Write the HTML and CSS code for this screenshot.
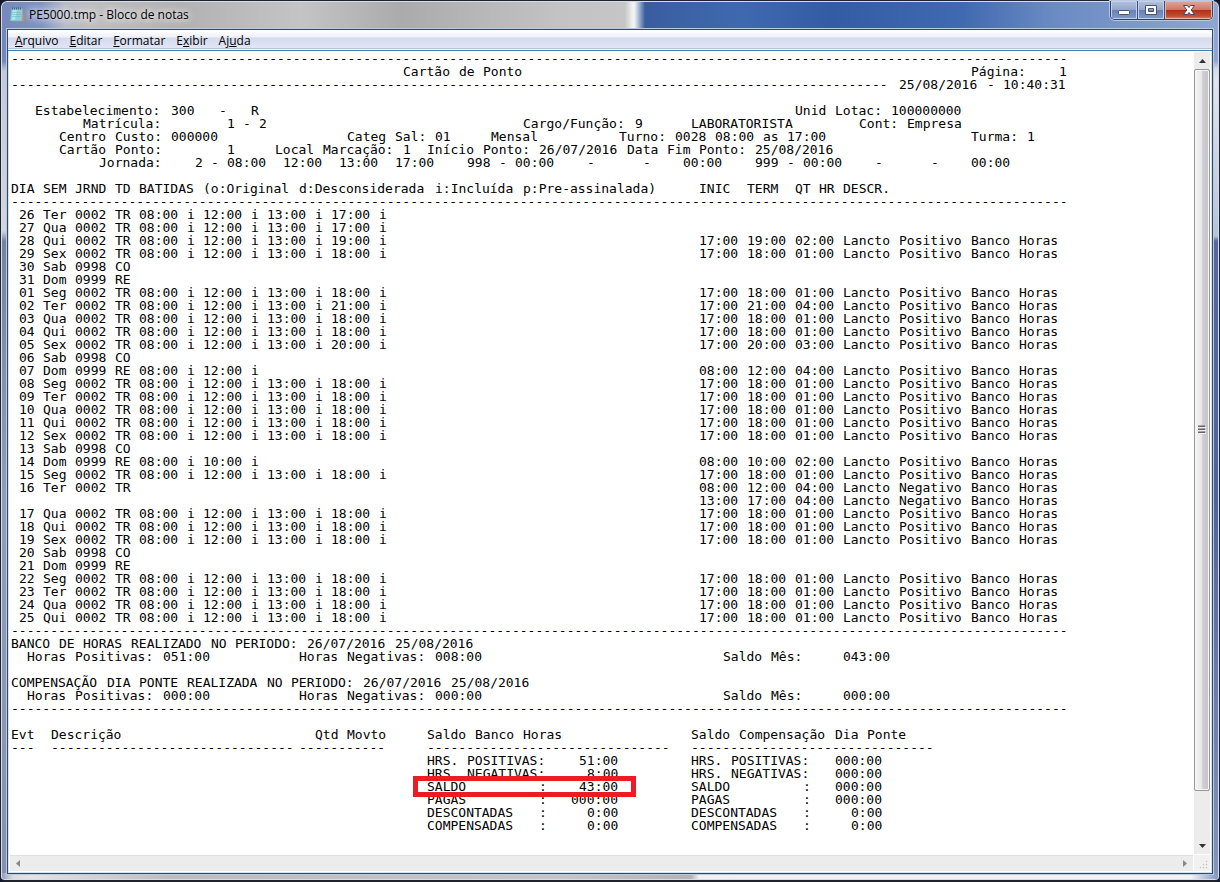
FILE: index.html
```html
<!DOCTYPE html>
<html lang="pt-BR">
<head>
<meta charset="utf-8">
<title>PE5000.tmp - Bloco de notas</title>
<link rel="stylesheet" href="styles.css">
</head>
<body>
<div class="window">
  <header class="titlebar">
    <svg class="app-icon" width="16" height="16" viewBox="0 0 16 16" aria-hidden="true">
      <path d="M3 2h11l1 12.500H3z" fill="#b59a5c"/>
      <path d="M2.500 1.500h11l-.5 12.500H1z" fill="#7fc3cf"/>
      <path d="M3.500 3h9l-.4 10H2.300z" fill="#b5e3e8"/>
      <path d="M3 5.500h9M3 7.500h9M3 9.500h9" stroke="#8dcbd5"/>
      <path d="M8 3h4.500l-.4 10H6z" fill="#6fb4c1" opacity=".45"/>
      <path d="M3.500.5v2M5.500.5v2M7.500.5v2M9.500.5v2M11.500.5v2" stroke="#46646c"/>
    </svg>
    <h1 class="title">PE5000.tmp - Bloco de notas</h1>
    <div class="controls">
      <button class="control" type="button" aria-label="Minimizar">
        <svg width="14" height="12" viewBox="0 0 14 12"><rect x="1.500" y="6.500" width="11" height="4" rx="1" fill="#fff" stroke="#4a5270"/></svg>
      </button>
      <button class="control" type="button" aria-label="Maximizar">
        <svg width="14" height="12" viewBox="0 0 14 12"><path d="M1.500 1.500h11v9h-11zM4.500 4.500h5v3h-5z" fill="#fff" fill-rule="evenodd" stroke="#4a5270" stroke-linejoin="round"/></svg>
      </button>
      <button class="control control-close" type="button" aria-label="Fechar">
        <svg width="14" height="12" viewBox="0 0 14 12"><path d="M1.500 1.500h4L7 3.500l1.500-2h4L9.200 6l3.300 4.500h-4L7 8.500l-1.500 2h-4L4.800 6z" fill="#fff" stroke="#4b4560" stroke-linejoin="round"/></svg>
      </button>
    </div>
  </header>
  <main class="client">
    <nav class="menubar" aria-label="Menu">
      <button class="menu" type="button"><u>A</u>rquivo</button>
      <button class="menu" type="button"><u>E</u>ditar</button>
      <button class="menu" type="button"><u>F</u>ormatar</button>
      <button class="menu" type="button">E<u>x</u>ibir</button>
      <button class="menu" type="button">Aj<u>u</u>da</button>
    </nav>
    <div class="workspace">
      <div class="editor">
<textarea class="document" aria-label="Documento" wrap="off" spellcheck="false">
---------------------------------------------------------------------------------------------------------------------------------------
                                                 Cartão de Ponto                                                        Página:    1
---------------------------------------------------------------------------------------------------------------- 25/08/2016 - 10:40:31

   Estabelecimento: 300   -   R                                                                   Unid Lotac: 100000000
         Matrícula:        1 - 2                                Cargo/Função: 9      LABORATORISTA        Cont: Empresa
      Centro Custo: 000000                Categ Sal: 01     Mensal          Turno: 0028 08:00 as 17:00                  Turma: 1
      Cartão Ponto:        1     Local Marcação: 1  Início Ponto: 26/07/2016 Data Fim Ponto: 25/08/2016
           Jornada:    2 - 08:00  12:00  13:00  17:00    998 - 00:00    -      -    00:00    999 - 00:00    -      -    00:00

DIA SEM JRND TD BATIDAS (o:Original d:Desconsiderada i:Incluída p:Pre-assinalada)     INIC  TERM  QT HR DESCR.
---------------------------------------------------------------------------------------------------------------------------------------
 26 Ter 0002 TR 08:00 i 12:00 i 13:00 i 17:00 i
 27 Qua 0002 TR 08:00 i 12:00 i 13:00 i 17:00 i
 28 Qui 0002 TR 08:00 i 12:00 i 13:00 i 19:00 i                                       17:00 19:00 02:00 Lancto Positivo Banco Horas
 29 Sex 0002 TR 08:00 i 12:00 i 13:00 i 18:00 i                                       17:00 18:00 01:00 Lancto Positivo Banco Horas
 30 Sab 0998 CO
 31 Dom 0999 RE
 01 Seg 0002 TR 08:00 i 12:00 i 13:00 i 18:00 i                                       17:00 18:00 01:00 Lancto Positivo Banco Horas
 02 Ter 0002 TR 08:00 i 12:00 i 13:00 i 21:00 i                                       17:00 21:00 04:00 Lancto Positivo Banco Horas
 03 Qua 0002 TR 08:00 i 12:00 i 13:00 i 18:00 i                                       17:00 18:00 01:00 Lancto Positivo Banco Horas
 04 Qui 0002 TR 08:00 i 12:00 i 13:00 i 18:00 i                                       17:00 18:00 01:00 Lancto Positivo Banco Horas
 05 Sex 0002 TR 08:00 i 12:00 i 13:00 i 20:00 i                                       17:00 20:00 03:00 Lancto Positivo Banco Horas
 06 Sab 0998 CO
 07 Dom 0999 RE 08:00 i 12:00 i                                                       08:00 12:00 04:00 Lancto Positivo Banco Horas
 08 Seg 0002 TR 08:00 i 12:00 i 13:00 i 18:00 i                                       17:00 18:00 01:00 Lancto Positivo Banco Horas
 09 Ter 0002 TR 08:00 i 12:00 i 13:00 i 18:00 i                                       17:00 18:00 01:00 Lancto Positivo Banco Horas
 10 Qua 0002 TR 08:00 i 12:00 i 13:00 i 18:00 i                                       17:00 18:00 01:00 Lancto Positivo Banco Horas
 11 Qui 0002 TR 08:00 i 12:00 i 13:00 i 18:00 i                                       17:00 18:00 01:00 Lancto Positivo Banco Horas
 12 Sex 0002 TR 08:00 i 12:00 i 13:00 i 18:00 i                                       17:00 18:00 01:00 Lancto Positivo Banco Horas
 13 Sab 0998 CO
 14 Dom 0999 RE 08:00 i 10:00 i                                                       08:00 10:00 02:00 Lancto Positivo Banco Horas
 15 Seg 0002 TR 08:00 i 12:00 i 13:00 i 18:00 i                                       17:00 18:00 01:00 Lancto Positivo Banco Horas
 16 Ter 0002 TR                                                                       08:00 12:00 04:00 Lancto Negativo Banco Horas
                                                                                      13:00 17:00 04:00 Lancto Negativo Banco Horas
 17 Qua 0002 TR 08:00 i 12:00 i 13:00 i 18:00 i                                       17:00 18:00 01:00 Lancto Positivo Banco Horas
 18 Qui 0002 TR 08:00 i 12:00 i 13:00 i 18:00 i                                       17:00 18:00 01:00 Lancto Positivo Banco Horas
 19 Sex 0002 TR 08:00 i 12:00 i 13:00 i 18:00 i                                       17:00 18:00 01:00 Lancto Positivo Banco Horas
 20 Sab 0998 CO
 21 Dom 0999 RE
 22 Seg 0002 TR 08:00 i 12:00 i 13:00 i 18:00 i                                       17:00 18:00 01:00 Lancto Positivo Banco Horas
 23 Ter 0002 TR 08:00 i 12:00 i 13:00 i 18:00 i                                       17:00 18:00 01:00 Lancto Positivo Banco Horas
 24 Qua 0002 TR 08:00 i 12:00 i 13:00 i 18:00 i                                       17:00 18:00 01:00 Lancto Positivo Banco Horas
 25 Qui 0002 TR 08:00 i 12:00 i 13:00 i 18:00 i                                       17:00 18:00 01:00 Lancto Positivo Banco Horas
---------------------------------------------------------------------------------------------------------------------------------------
BANCO DE HORAS REALIZADO NO PERIODO: 26/07/2016 25/08/2016
  Horas Positivas: 051:00           Horas Negativas: 008:00                              Saldo Mês:     043:00

COMPENSAÇÃO DIA PONTE REALIZADA NO PERIODO: 26/07/2016 25/08/2016
  Horas Positivas: 000:00           Horas Negativas: 000:00                              Saldo Mês:     000:00
---------------------------------------------------------------------------------------------------------------------------------------

Evt  Descrição                        Qtd Movto     Saldo Banco Horas                Saldo Compensação Dia Ponte
---  ------------------------------- -----------     -------------------------------   -------------------------------
                                                    HRS. POSITIVAS:    51:00         HRS. POSITIVAS:   000:00
                                                    HRS. NEGATIVAS:     8:00         HRS. NEGATIVAS:   000:00
                                                    SALDO         :    43:00         SALDO         :   000:00
                                                    PAGAS         :   000:00         PAGAS         :   000:00
                                                    DESCONTADAS   :     0:00         DESCONTADAS   :     0:00
                                                    COMPENSADAS   :     0:00         COMPENSADAS   :     0:00</textarea>
        <div class="highlight"></div>
      </div>
      <div class="scroll scroll-v">
        <button class="arrow" type="button" aria-label="Rolar para cima"><svg width="7" height="4" viewBox="0 0 7 4"><path d="M3.500 0 7 4H0z"/></svg></button>
        <div class="track"><div class="thumb"><svg width="8" height="9" viewBox="0 0 8 9"><path d="M0 1.500h7M0 4.500h7M0 7.500h7" stroke="#666" stroke-width="2"/><path d="M0 2.500h8M0 5.500h8M0 8.500h8" stroke="#eee"/></svg></div></div>
        <button class="arrow" type="button" aria-label="Rolar para baixo"><svg width="7" height="4" viewBox="0 0 7 4"><path d="M0 0h7L3.500 4z"/></svg></button>
      </div>
      <div class="scroll scroll-h">
        <button class="arrow arrow-off" type="button" aria-label="Rolar para a esquerda"><svg width="4" height="7" viewBox="0 0 4 7"><path d="M4 0v7L0 3.500z"/></svg></button>
        <button class="arrow arrow-off" type="button" aria-label="Rolar para a direita"><svg width="4" height="7" viewBox="0 0 4 7"><path d="M0 0v7l4-3.500z"/></svg></button>
      </div>
      <div class="grip"><svg width="9" height="9" viewBox="0 0 9 9"><path d="M7 1h1v1H7zM4 4h1v1H4zM7 4h1v1H7zM1 7h1v1H1zM4 7h1v1H4zM7 7h1v1H7z" fill="#aaa" stroke="#ccc" stroke-width=".5"/></svg></div>
    </div>
  </main>
</div>
<script src="columns.js"></script>
</body>
</html>
```

FILE: columns.js
```js
const doc = document.querySelector(".document");
doc.value = doc.value.replace(/ /g, "\t");
```

FILE: styles.css
```css
* {
  box-sizing: border-box;
}

html,
body {
  height: 100%;
  margin: 0;
}

body {
  background: #10162b;
  font-family: "Open Sans", "Noto Sans", sans-serif;
  font-size: 12px;
  color: #000;
}

button {
  margin: 0;
  padding: 0;
  border: 0;
  background: none;
  font: inherit;
  color: inherit;
}

.window {
  display: flex;
  flex-direction: column;
  height: 100vh;
  padding: 0 6px 6px 6px;
  border: 1px solid #20222c;
  border-bottom-width: 2px;
  border-radius: 7px 7px 5px 5px;
  box-shadow: inset 0 0 0 1px #d5dcea;
  background:
    linear-gradient(90deg, #7488bd 0, #7f92c2 40px, #b9bcc8 64px, #bebebe 90px, #b2b2b2 180px, #c4c4c4 300px, #ababab 400px, #c3c3c3 560px, #c6c6c6 624px, #f3f3f3 632px, #e8ecf4 634px, #3a5da0 644px, #3f69af 740px, #335ca5 830px, #3f69b0 960px, #6a8ac4 1050px, #8fa6d2 100%) top / 100% 29px no-repeat,
    linear-gradient(90deg, #8e98bd 0, #dcdcdc 12px, #e4e4e4 30px, #bdbdbd 170px, #c6c6c6 560px, #b4b4b4 690px, #f1f1f1 698px, #f3f3f3 1190px, #7c93bf 100%) bottom / 100% 7px no-repeat,
    linear-gradient(180deg, #7488bd 0, #7488bd 60px, #c3c8da 70px, #d3d5df 230px, #7681a5 240px, #929cbd 500px, #8790b4 100%) left / 8px 100% no-repeat,
    linear-gradient(180deg, #8fa6d2 0, #8fa6d2 60px, #d3dbea 68px, #dfe5ef 80px, #b4c3de 235px, #53699b 240px, #4d6597 500px, #8296bf 100%) right / 8px 100% no-repeat;
}

.titlebar {
  display: flex;
  flex: none;
  align-items: center;
  height: 28px;
  padding-left: 2px;
}

.app-icon {
  flex: none;
}

.title {
  flex: 1;
  margin: 0 0 0 4px;
  font-size: 12px;
  font-weight: 400;
  line-height: 16px;
  text-shadow: 0 0 6px #fff, 0 0 10px #fff;
}

.controls {
  display: flex;
  align-self: flex-start;
  height: 19px;
  border: 1px solid #2f4068;
  border-top: 0;
  border-radius: 0 0 5px 5px;
  box-shadow: 0 0 0 1px #b9c8e3;
  overflow: hidden;
}

.control {
  display: grid;
  place-items: center;
  width: 27px;
  border-right: 1px solid #3c4f7c;
  background: linear-gradient(#b4c1dd 0, #93a6cc 48%, #6580b3 50%, #7f9aca 100%);
  box-shadow: inset 0 0 0 1px #c3d0e8;
}

.control-close {
  width: 47px;
  border-right: 0;
  background: linear-gradient(#dda79c 0, #cf7766 48%, #b12c17 50%, #c6502f 85%, #d98e70 100%);
  box-shadow: inset 0 0 0 1px #e5b5a8;
}

.client {
  display: flex;
  flex: 1;
  flex-direction: column;
  min-height: 0;
  border: 1px solid #39465e;
  box-shadow: 0 0 0 1px #b9cbe0;
  background: #fff;
}

.menubar {
  display: flex;
  flex: none;
  gap: 11px;
  height: 21px;
  padding-left: 7px;
  border-bottom: 1px solid #3f7fae;
  background: linear-gradient(#fff 0, #eef1f8 7px, #d5dbed 8px, #e1e6f6 18px, #b8c3d6 18px, #b8c3d6 19px, #f2f6fc 19px);
}

.menu {
  line-height: 19px;
}

.menu u {
  text-underline-offset: 1px;
}

.workspace {
  display: grid;
  flex: 1;
  grid-template-columns: 1fr 16px;
  grid-template-rows: 1fr 16px;
  gap: 1px;
  min-height: 0;
  padding: 1px 1px 1px 1px;
  border: 1px solid #cde4f3;
  border-top: 0;
}

.editor {
  position: relative;
  min-width: 0;
  min-height: 0;
  overflow: hidden;
}

.document {
  display: block;
  width: 100%;
  height: 100%;
  padding: 0 1px;
  border: 0;
  outline: 0;
  resize: none;
  overflow: hidden;
  background: #fff;
  font-family: "DejaVu Sans Mono", monospace;
  font-size: 13px;
  line-height: 13px;
  tab-size: 8px;
  color: #000;
}

.highlight {
  position: absolute;
  top: 724px;
  left: 403px;
  width: 223px;
  height: 21px;
  border: 5px solid #ed1c24;
  pointer-events: none;
}

.scroll {
  display: flex;
  background: #ececec;
}

.scroll-v {
  flex-direction: column;
}

.scroll-h {
  justify-content: space-between;
  border-top: 1px solid #e0e0e0;
}

.arrow {
  display: grid;
  flex: none;
  place-items: center;
  width: 16px;
  height: 17px;
  fill: #333;
}

.scroll-h .arrow {
  height: 14px;
}

.arrow-off {
  fill: #888;
}

.track {
  flex: 1;
  min-height: 0;
}

.thumb {
  display: grid;
  place-items: center;
  height: 94%;
  border: 1px solid #979797;
  border-radius: 2px;
  background: linear-gradient(90deg, #f5f5f5 0, #e9e9eb 45%, #cfcfd3 55%, #c2c2c8 100%);
  box-shadow: inset 0 0 0 1px #f7f7f7;
}

.grip {
  display: flex;
  align-items: flex-end;
  justify-content: flex-end;
  padding: 2px;
  background: #f1f1f1;
}
```
